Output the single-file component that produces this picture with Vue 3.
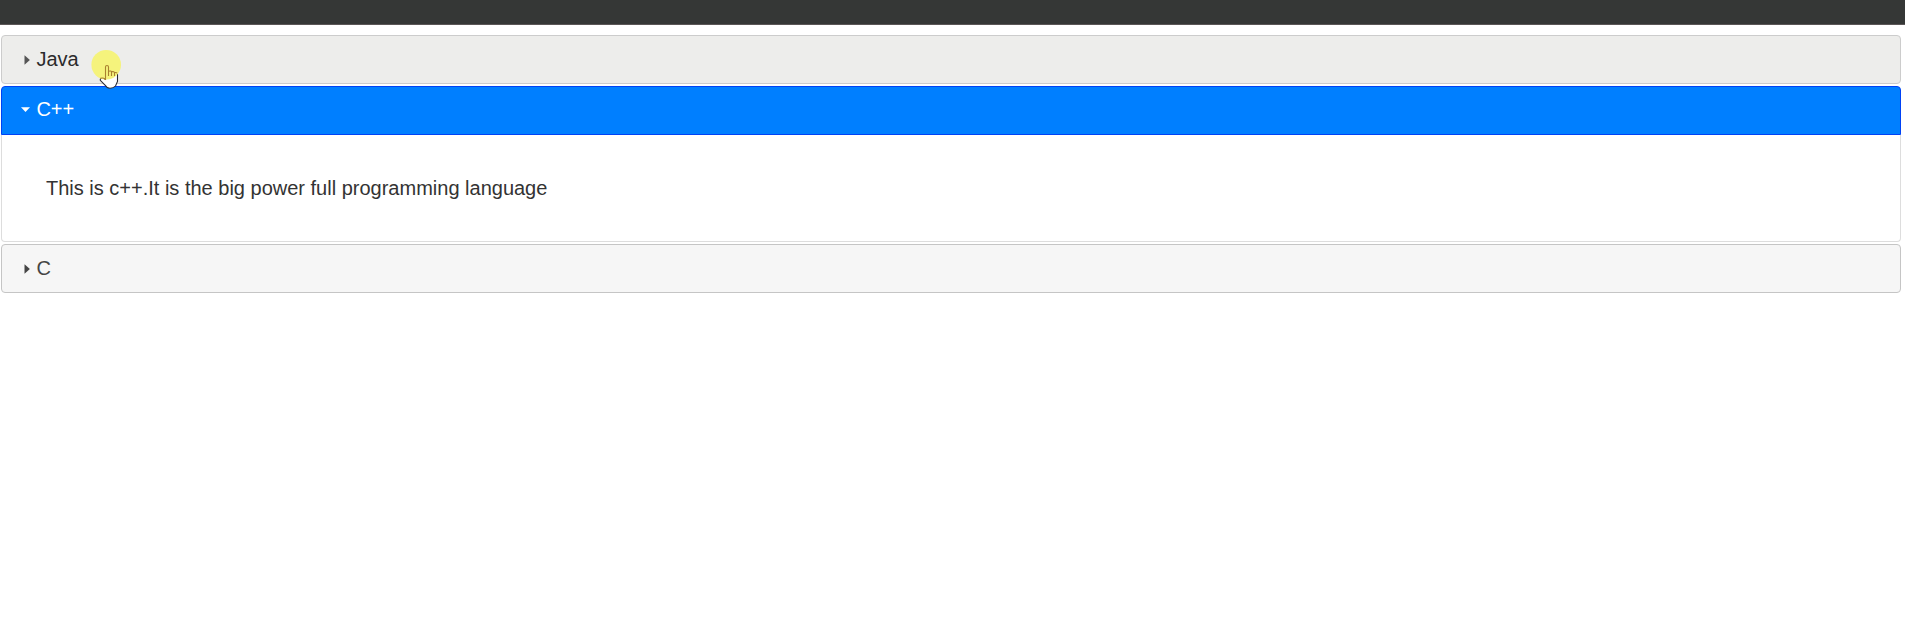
<script setup>
const sections = [
  { title: 'Java', state: 'hover' },
  { title: 'C++', state: 'active', text: 'This is c++.It is the big power full programming language' },
  { title: 'C', state: 'normal' },
]
</script>

<template>
  <div class="page">
    <div class="topbar"></div>
    <div class="accordion">
      <template v-for="s in sections" :key="s.title">
        <div class="header" :class="s.state">
          <svg class="arrow" width="12" height="12" viewBox="0 0 12 12">
            <path v-if="s.state === 'active'" d="M1 3.2H10L5.5 8Z" />
            <path v-else d="M4.5 1.2V10.8L9.9 6Z" />
          </svg>
          <span class="title">{{ s.title }}</span>
        </div>
        <div v-if="s.text" class="content">
          <p>{{ s.text }}</p>
        </div>
      </template>
    </div>
    <div class="pointer">
      <svg width="34" height="44" viewBox="0 0 34 44">
        <path class="hand" d="M15.5 30V17Q15.5 15.5 17 15.5T18.5 17V24V21.2Q21 20 21.8 21.5Q24.5 20.8 25 22.3Q27.5 22 27.5 24.5V31.5L25.5 36Q23.5 38.3 20 38.3Q17 38.3 15 35L10.3 30.3Q10 28 12 28Q13.5 28 15.5 29.5Z" />
        <circle class="halo" cx="16.2" cy="14.8" r="14.8" />
        <path class="lines" d="M10.5 28.3Q12.8 27.3 15.5 29.2V17Q15.5 15.5 17 15.5T18.5 17V26M18.5 21.2Q21.5 20.4 21.5 22V26M21.5 21.7Q24.5 21.2 24.5 23V26M24.5 22.5Q26.6 22.2 27.2 23.3" />
      </svg>
    </div>
  </div>
</template>

<style>
body {
  margin: 0;
  background: #fff;
}
</style>

<style scoped>
.page {
  position: relative;
  height: 632px;
  overflow: hidden;
  font-family: "Liberation Sans", Arial, sans-serif;
  font-size: 20px;
  color: #333;
}
.topbar {
  box-sizing: border-box;
  height: 25px;
  background: #353736;
  border-bottom: 1px solid #5b5657;
}
.accordion {
  margin: 10px 4px 0 1px;
}
.header {
  box-sizing: border-box;
  display: flex;
  align-items: center;
  height: 49px;
  margin-top: 2px;
  padding-left: 18px;
  border: 1px solid #c5c5c5;
  border-radius: 4px;
  background: #f6f6f6;
  color: #454545;
}
.hover {
  border-color: #ccc;
  background: #ededeb;
  color: #2b2b2b;
}
.active {
  padding-bottom: 2px;
  border-color: #0042f5;
  border-radius: 4px 4px 0 0;
  background: #007fff;
  color: #fff;
}
.arrow {
  margin-right: 4.4px;
  fill: #454545;
}
.hover .arrow {
  fill: #555;
}
.active .arrow {
  fill: #fff;
}
.content {
  box-sizing: border-box;
  height: 107px;
  padding: 40px 44px 0;
  border: 1px solid #ddd;
  border-top: 0;
  border-radius: 0 0 4px 4px;
}
.content p {
  margin: 0;
  line-height: 26px;
}
.pointer {
  position: absolute;
  left: 91px;
  top: 50px;
  width: 34px;
  height: 44px;
}
.pointer svg {
  display: block;
  margin-left: -1px;
}
.hand {
  fill: #fff;
  stroke: #292b34;
  stroke-width: 1.1;
}
.halo {
  fill: #f5f37c;
}
.lines {
  fill: none;
  stroke: #a9812f;
  stroke-width: 1.1;
}
</style>
